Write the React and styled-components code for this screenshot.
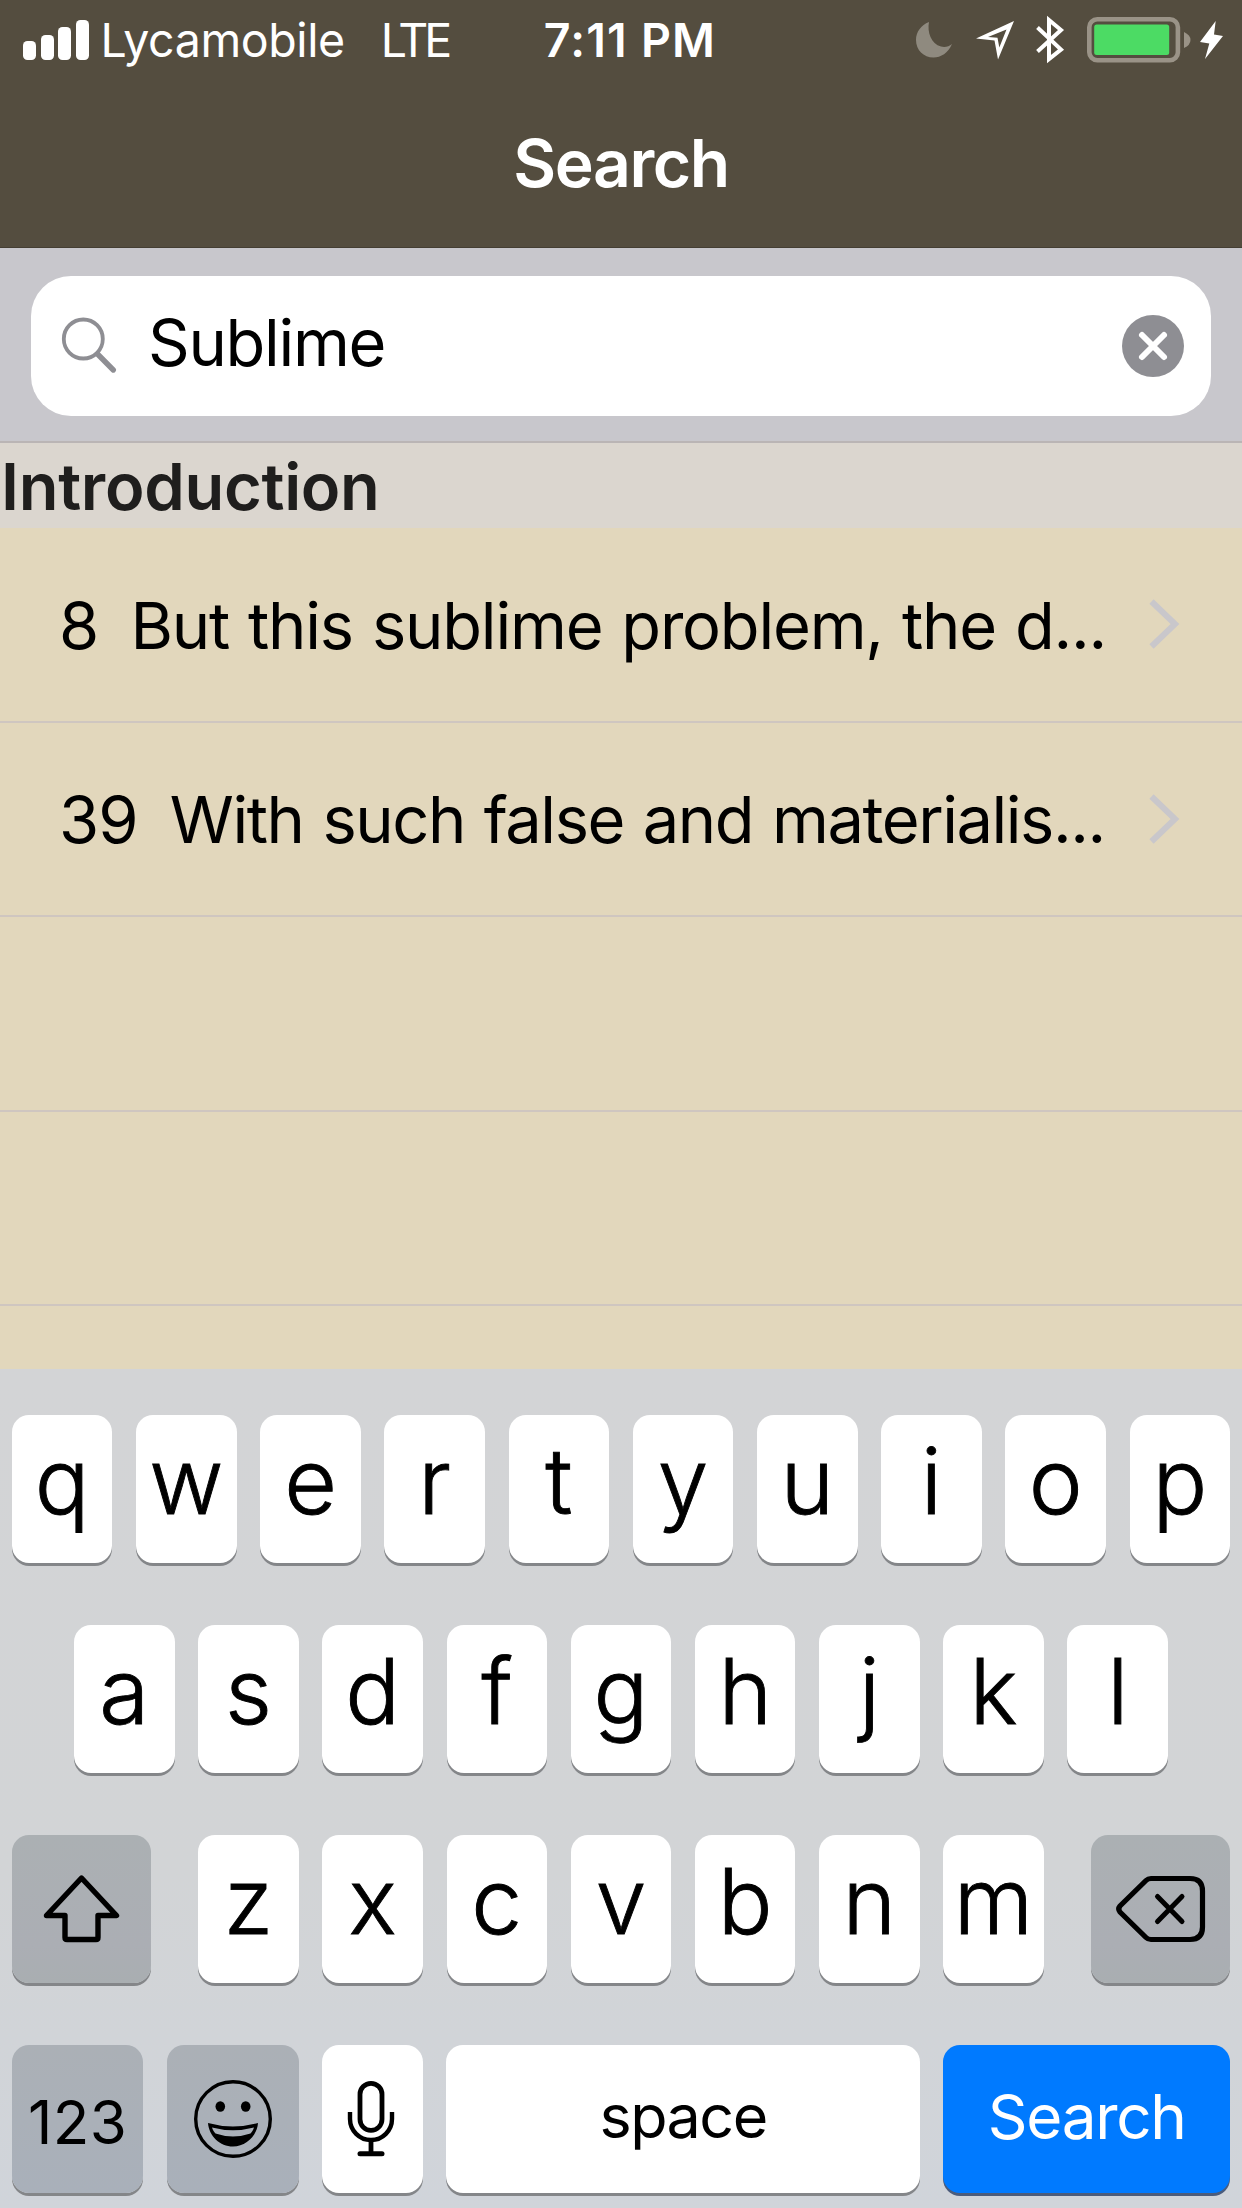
import React from "react";
import styled, { createGlobalStyle } from "styled-components";

const GlobalStyle = createGlobalStyle`
  * { box-sizing: border-box; }
  body { margin: 0; background: #e2d7bc; }
`;

const Screen = styled.div`
  width: 1242px;
  height: 2208px;
  overflow: hidden;
  display: flex;
  flex-direction: column;
  background: #e2d7bc;
  color: #000;
  font-family: Inter, "Liberation Sans", sans-serif;
  font-kerning: normal;
  white-space: pre;
`;

const Header = styled.header`
  height: 248px;
  flex: none;
  background: #544d3f;
  border-bottom: 1px solid #443e33;
  color: #fff;
`;

const StatusBar = styled.div`
  height: 79px;
  display: grid;
  grid-template-columns: 1fr auto 1fr;
  align-items: center;
  padding: 0 19px 0 23px;
  font-size: 46.5px;
  line-height: 60px;
`;

const Carrier = styled.div`
  display: flex;
  align-items: center;
`;

const SignalBars = styled.div`
  display: flex;
  align-items: flex-end;
  gap: 4.5px;
  height: 40px;
  margin-right: 12px;
`;

const Bar = styled.i`
  width: 13px;
  height: ${(p) => p.$height}px;
  border-radius: 4.5px;
  background: #fff;
`;

const StatusText = styled.span`
  letter-spacing: ${(p) => p.$tracking || 0}px;
  margin-left: ${(p) => p.$gap || 0}px;
  font-weight: ${(p) => p.$weight || 400};
`;

const StatusIcons = styled.div`
  display: flex;
  justify-content: flex-end;
  align-items: center;
`;

const TitleBar = styled.h1`
  margin: 0;
  height: 168px;
  line-height: 168px;
  text-align: center;
  font-size: 66px;
  font-weight: 600;
  letter-spacing: -1.4px;
`;

const SearchBar = styled.div`
  height: 195px;
  flex: none;
  padding: 28px 31px 25px;
  background: #c8c7cc;
  border-bottom: 2px solid #bab5b5;
`;

const SearchField = styled.div`
  height: 140px;
  border-radius: 40px;
  background: #fff;
  display: flex;
  align-items: center;
  padding: 0 27px 0 31px;
`;

const Query = styled.span`
  flex: 1;
  margin-left: 32px;
  padding-bottom: 8px;
  font-size: 65px;
  letter-spacing: -1.3px;
`;

const SectionHeader = styled.h2`
  margin: 0;
  height: 85px;
  flex: none;
  padding-left: 1px;
  background: #dbd6cf;
  color: #1f1e1d;
  font-size: 65px;
  line-height: 88px;
  font-weight: 600;
  letter-spacing: -0.3px;
`;

const Results = styled.div`
  height: 841px;
  flex: none;
  overflow: hidden;
`;

const ResultRow = styled.div`
  height: 194.5px;
  display: flex;
  align-items: center;
  padding: 0 63px 0 59px;
  border-bottom: 2px solid #cfc6c0;
  font-size: 65px;
`;

const Verse = styled.span`
  padding-top: 2px;
  letter-spacing: -0.8px;
  margin-right: 32px;
`;

const Excerpt = styled.span`
  flex: 1;
  padding-top: 2px;
  letter-spacing: ${(p) => p.$tracking}px;
  word-spacing: 2px;
`;

const Keyboard = styled.div`
  flex: 1;
  display: flex;
  flex-direction: column;
  gap: 62px;
  padding-top: 46px;
  background: linear-gradient(#d3d4d6 0%, #d2d4d6 60%, #d0d4da 100%);
`;

const KeyRow = styled.div`
  height: 148px;
  flex: none;
  display: flex;
  justify-content: center;
  gap: 23.6px;
`;

const keyColors = {
  light: "#fff",
  shift: "linear-gradient(#abb0b3, #abaeb4 75%, #a9aeb1)",
  mode: "linear-gradient(#abb0b6, #a9b0ba)",
  action: "#007aff",
};

const Key = styled.div`
  width: ${(p) => p.$width || 100.6}px;
  height: 148px;
  flex: none;
  display: flex;
  align-items: center;
  justify-content: center;
  margin: 0 ${(p) => p.$after || 0}px 0 ${(p) => p.$before || 0}px;
  padding-bottom: ${(p) => p.$lift || 0}px;
  padding-top: ${(p) => p.$drop || 0}px;
  border-radius: 17px;
  background: ${(p) => keyColors[p.$tone || "light"]};
  box-shadow: 0 3px 0 ${(p) => (p.$tone === "action" ? "#4b5c7c" : "#848689")};
  color: ${(p) => (p.$tone === "action" ? "#fff" : "#000")};
  font-size: ${(p) => p.$size || 91}px;
  font-weight: ${(p) => p.$weight || 300};
  letter-spacing: ${(p) => p.$tracking || 0}px;
`;

const LetterKey = styled(Key)`
  padding-bottom: 17px;
  -webkit-text-stroke: 0.9px #000;
`;

const Icon = styled.svg`
  display: block;
  flex: none;
  overflow: visible;
  margin-left: ${(p) => p.$gap || 0}px;
  margin-right: ${(p) => p.$after || 0}px;
`;

const Moon = () => (
  <Icon width="36" height="36" viewBox="0 0 36 36">
    <path d="M13 0C11 10 15 22 25 24.5C29 25.5 33 24.5 36 22C32 31 25 35.5 17.5 35.5C7.5 35.5 0 28 0 18C0 10 5 3 13 0Z" fill="#8f8a7f" />
  </Icon>
);

const Location = () => (
  <Icon $gap={24} width="38" height="38" viewBox="0 0 38 38">
    <path fillRule="evenodd" d="M38 0L22 38.500L18.500 19.500L0 17.500ZM30.500 8.500L12 16L21.500 16.700L23.300 26.500Z" fill="#fff" />
  </Icon>
);

const Bluetooth = () => (
  <Icon $gap={22} width="28" height="47" viewBox="0 0 28 47">
    <path d="M1.5 11.5L25 33.5L13 43V4L25 14L1.5 35.5" fill="none" stroke="#fff" strokeWidth="4" />
  </Icon>
);

const Battery = () => (
  <Icon $gap={23} width="104" height="46" viewBox="0 0 104 46">
    <rect x="2.3" y="2.3" width="88.6" height="41" rx="8" fill="none" stroke="#9a9387" strokeWidth="4.6" />
    <rect x="7.2" y="7.5" width="75" height="30.5" rx="2.5" fill="#4cdb64" />
    <path d="M97 15Q103.5 18 103.5 23T97 31Z" fill="#9a9387" />
  </Icon>
);

const Bolt = () => (
  <Icon $gap={9} width="23" height="38" viewBox="0 0 23 38">
    <path d="M15.7 0L0 21L9.3 22.5L5 38L23 15L14 13.5Z" fill="#fff" />
  </Icon>
);

const Magnifier = () => (
  <Icon width="54" height="54" viewBox="0 0 54 54">
    <circle cx="21.3" cy="20" r="19.5" fill="none" stroke="#8e8e93" strokeWidth="3.8" />
    <path d="M35.5 35L51.3 51" stroke="#8e8e93" strokeWidth="5.4" strokeLinecap="round" />
  </Icon>
);

const ClearIcon = () => (
  <Icon width="62" height="62" viewBox="0 0 62 62">
    <circle cx="31" cy="31" r="31" fill="#8e8e93" />
    <path d="M20 20L42 42M42 20L20 42" stroke="#fff" strokeWidth="6" strokeLinecap="round" />
  </Icon>
);

const Chevron = () => (
  <Icon width="30" height="50" viewBox="0 0 30 50">
    <path d="M2.5 2.5L26 25L2.5 47.5" fill="none" stroke="#c9c7cb" strokeWidth="6" />
  </Icon>
);

const ShiftIcon = () => (
  <Icon $after={1} width="77" height="68" viewBox="0 0 76 68">
    <path
      d="M38 3L73 40.5H54.5V62.5Q54.5 64.5 52.5 64.5H23.5Q21.5 64.5 21.5 62.5V40.5H3Z"
      fill="none"
      stroke="#000"
      strokeWidth="5.4"
      strokeLinejoin="round"
    />
  </Icon>
);

const DeleteIcon = () => (
  <Icon width="89" height="66" viewBox="0 0 89 66">
    <path
      d="M35 2.5H74Q86.5 2.5 86.5 15V51Q86.5 63.5 74 63.5H35Q32 63.5 30 61.5L4 36Q1.5 33 4 30L30 4.5Q32 2.5 35 2.5Z"
      fill="none"
      stroke="#000"
      strokeWidth="5.2"
    />
    <path d="M41.5 20.5L66 45.5M66 20.5L41.5 45.5" stroke="#000" strokeWidth="5" strokeLinecap="round" />
  </Icon>
);

const EmojiIcon = () => (
  <Icon width="78" height="78" viewBox="0 0 78 78">
    <circle cx="39" cy="39" r="37.3" fill="none" stroke="#000" strokeWidth="3.4" />
    <ellipse cx="26.3" cy="26.5" rx="4.8" ry="5.2" />
    <ellipse cx="51.7" cy="26.5" rx="4.8" ry="5.2" />
    <path
      fillRule="evenodd"
      d="M14 43Q39 50 64 43C63 56 52 66.5 39 66.5S15 56 14 43ZM18 47.5C19 50.5 20 52 21.5 53.5Q39 59.5 56.5 53.5C58 52 59 50.5 60 47.5Q39 53 18 47.5Z"
    />
  </Icon>
);

const MicIcon = () => (
  <Icon $after={2.5} width="46" height="76" viewBox="0 0 46 76">
    <g fill="none" stroke="#000">
      <rect x="12" y="2.3" width="22" height="47" rx="11" strokeWidth="4.8" />
      <path d="M2 31V38A21 21 0 0 0 44 38V31" strokeWidth="4.4" />
      <path d="M23 59V73" strokeWidth="4.8" />
      <path d="M12 72.7H34" strokeWidth="5" strokeLinecap="round" />
    </g>
  </Icon>
);

const results = [
  { verse: "8", text: "But this sublime problem, the d...", tracking: -1.22 },
  { verse: "39", text: "With such false and materialis...", tracking: -1.45 },
];

const LetterKeys = ({ letters }) =>
  letters.split("").map((letter) => <LetterKey key={letter}>{letter}</LetterKey>);

export default function App() {
  return (
    <Screen>
      <GlobalStyle />
      <Header>
        <StatusBar>
          <Carrier>
            <SignalBars>
              {[19, 25, 33, 40].map((h) => (
                <Bar key={h} $height={h} />
              ))}
            </SignalBars>
            <StatusText $tracking={-0.4}>Lycamobile</StatusText>
            <StatusText $gap={36} $tracking={-4.2}>LTE</StatusText>
          </Carrier>
          <StatusText $weight={600} $gap={14} $tracking={1.2}>7:11 PM</StatusText>
          <StatusIcons>
            <Moon />
            <Location />
            <Bluetooth />
            <Battery />
            <Bolt />
          </StatusIcons>
        </StatusBar>
        <TitleBar>Search</TitleBar>
      </Header>

      <SearchBar>
        <SearchField>
          <Magnifier />
          <Query>Sublime</Query>
          <ClearIcon />
        </SearchField>
      </SearchBar>

      <SectionHeader>Introduction</SectionHeader>
      <Results>
        {results.map((r) => (
          <ResultRow key={r.verse}>
            <Verse>{r.verse}</Verse>
            <Excerpt $tracking={r.tracking}>{r.text}</Excerpt>
            <Chevron />
          </ResultRow>
        ))}
        <ResultRow />
        <ResultRow />
      </Results>

      <Keyboard>
        <KeyRow>
          <LetterKeys letters="qwertyuiop" />
        </KeyRow>
        <KeyRow>
          <LetterKeys letters="asdfghjkl" />
        </KeyRow>
        <KeyRow>
          <Key $tone="shift" $width={139} $after={23.4}>
            <ShiftIcon />
          </Key>
          <LetterKeys letters="zxcvbnm" />
          <Key $tone="shift" $width={139} $before={23.4}>
            <DeleteIcon />
          </Key>
        </KeyRow>
        <KeyRow>
          <Key $tone="mode" $width={131.5} $size={60} $weight={400} $drop={5} $tracking={0.4}>
            123
          </Key>
          <Key $tone="mode" $width={131.5}>
            <EmojiIcon />
          </Key>
          <Key>
            <MicIcon />
          </Key>
          <Key $width={473.6} $size={61} $weight={400} $lift={6} $tracking={-1.5}>
            space
          </Key>
          <Key $tone="action" $width={286.6} $size={62} $weight={400} $lift={6} $tracking={-1.3}>
            Search
          </Key>
        </KeyRow>
      </Keyboard>
    </Screen>
  );
}
